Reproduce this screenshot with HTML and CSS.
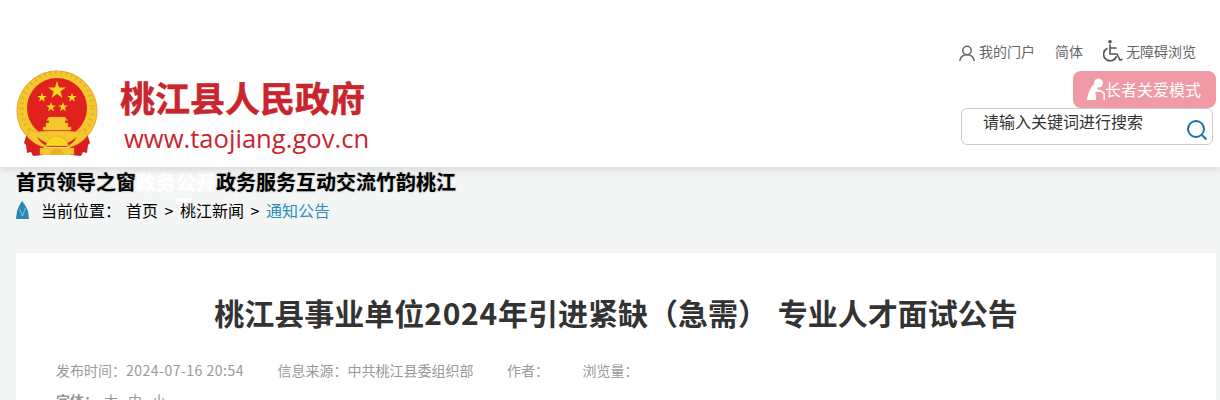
FILE: index.html
```html
<!DOCTYPE html>
<html lang="zh-CN">
<head>
    <meta charset="UTF-8">
    <meta name="viewport" content="width=device-width, initial-scale=1.0">
    <title>桃江县事业单位2024年引进紧缺（急需）专业人才面试公告</title>
    <link rel="stylesheet" href="styles.css">
</head>
<body>
    <header>
        <div class="logo">
            <svg class="emblem" viewBox="16 70 82 88" width="82" height="88">
                <!-- ribbons go under the ring -->
                <path d="M27 133c4 7 9 11 17 14l-1 8-10 1-2-4-4 1-1-8-2-2z" fill="#d8201f"/>
                <path d="M87 133c-4 7-9 11-17 14l1 8 10 1 2-4 4 1 1-8 2-2z" fill="#d8201f"/>
                <path d="M31 140C22 133 17 123 17 111 17 89 35 71 57 71s40 18 40 40c0 12-5 22-14 29z" fill="#f5c72f" stroke="#dc9d1e" stroke-width=".8"/>
                <circle cx="57" cy="108" r="35.500" fill="none" stroke="#e3a423" stroke-width="4" stroke-dasharray="1.500 4" opacity=".7"/>
                <circle cx="57" cy="108" r="30" fill="#e0211d"/>
                <polygon points="57,81 59.100,87.500 65.900,87.500 60.400,91.500 62.500,98 57,94 51.500,98 53.600,91.500 48.100,87.500 54.900,87.500" fill="#f8d61f"/>
                <polygon points="42,92.500 43.200,96 46.800,96 43.900,98.200 45,101.700 42,99.600 39,101.700 40.100,98.200 37.200,96 40.800,96" fill="#f8d61f"/>
                <polygon points="51,102 52.200,105.500 55.800,105.500 52.900,107.700 54,111.200 51,109.100 48,111.200 49.100,107.700 46.200,105.500 49.800,105.500" fill="#f8d61f"/>
                <polygon points="63,102 64.200,105.500 67.800,105.500 64.900,107.700 66,111.200 63,109.100 60,111.200 61.100,107.700 58.200,105.500 61.800,105.500" fill="#f8d61f"/>
                <polygon points="72,92.500 73.200,96 76.800,96 73.900,98.200 75,101.700 72,99.600 69,101.700 70.100,98.200 67.200,96 70.800,96" fill="#f8d61f"/>
                <path d="M49 117h16l2.500 3.500H65v2.500h3v4h3v3H43v-3h3v-4h3v-2.500h-2.500z" fill="#f5c72f" stroke="#dc9d1e" stroke-width=".4"/>
                <path d="M30 129c6 5 12 2 17 2h20c5 0 11 3 17-2l3 7c-5 6-11 10-18 11H45c-7-1-13-5-18-11z" fill="#f5c72f" stroke="#dc9d1e" stroke-width=".7"/>
                <path d="M37 137c4 3 7 5 10 6l3-5h14l3 5c3-1 6-3 10-6-3 5-7 8-11 10H48c-4-2-8-5-11-10z" fill="#d8201f"/>
                <path d="M46 146a11 10 0 0 1 22 0z" fill="#f8d61f" stroke="#dc9d1e" stroke-width=".8" stroke-dasharray="2 1"/>
                <rect x="40" y="148" width="34" height="6.500" fill="#f5c72f" stroke="#dc9d1e" stroke-width=".4"/>
                <path d="M50 154.500c2-5 4-6 7-6s5 1 7 6z" fill="#e9ae24"/>
            </svg>
            <div class="logo-text">
                <div class="site-name">桃江县人民政府</div>
                <div class="site-url">www.taojiang.gov.cn</div>
            </div>
        </div>
        <div class="tools">
            <div class="links">
                <a class="link-user">
                    <svg viewBox="0 0 18 18" width="18" height="18"><circle cx="9" cy="6.500" r="4.200" fill="none" stroke="#666" stroke-width="1.500"/><path d="M1.800 17c.5-4 3.400-6.300 7.200-6.300s6.700 2.300 7.200 6.300" fill="none" stroke="#666" stroke-width="1.500"/></svg>
                    我的门户
                </a>
                <a class="link-lang">简体</a>
                <a class="link-access">
                    <svg viewBox="0 0 20 22" width="20" height="22"><circle cx="7" cy="1.800" r="1.800" fill="#555"/><path d="M7 4.500V14h7l3 6 2.500-.8M7 8h6.500" fill="none" stroke="#555" stroke-width="1.600"/><path d="M4.500 8.200a6.600 6.600 0 1 0 9 8" fill="none" stroke="#555" stroke-width="1.600"/></svg>
                    无障碍浏览
                </a>
            </div>
            <a class="elder-btn">
                <svg viewBox="0 0 18 22" width="18" height="22"><circle cx="11.500" cy="5" r="4.500" fill="#fff"/><path d="M7 6C3 10 1 15 0 22h9v-5l-1-3h6l2.500 2v6H18v-7l-4-3-4-1 1-2C9 9 8 8 7 6z" fill="#fff"/></svg>长者关爱模式
            </a>
            <div class="search">
                <span class="search-text">请输入关键词进行搜索</span>
                <svg class="search-icon" viewBox="0 0 22 22" width="22" height="22"><circle cx="10" cy="10" r="8" fill="none" stroke="#1a74a8" stroke-width="2"/><path d="M16 16l4.500 4.500" stroke="#1a74a8" stroke-width="2"/></svg>
            </div>
        </div>
    </header>

    <nav>
        <a>首页</a><a>领导之窗</a><a class="nav-active">政务公开</a><a>政务服务</a><a>互动交流</a><a>竹韵桃江</a>
    </nav>

    <div class="crumb">
        <svg viewBox="0 0 13 18" width="13" height="18"><path d="M6 0l3 4 3 6 1 8H0l1-8 2-5z" fill="#2a86b2"/><path d="M6.500 15L3.500 8M6.500 15L9.500 7" stroke="#cfe6f0" stroke-width=".6" fill="none"/></svg>
        <span class="crumb-label">当前位置：</span>
        <a>首页</a><span class="sep">&gt;</span><a class="crumb-news">桃江新闻</a><span class="sep">&gt;</span><a class="crumb-now">通知公告</a>
    </div>

    <main>
        <h1>桃江县事业单位<span class="num">2024</span>年引进紧缺（急需） 专业人才面试公告</h1>
        <div class="meta">
            <span>发布时间：<span class="date">2024-07-16 20:54</span></span>
            <span>信息来源：中共桃江县委组织部</span>
            <span>作者：</span>
            <span>浏览量：</span>
        </div>
        <div class="fontsize">
            <b>字体：</b><a>大</a><a>中</a><a>小</a>
        </div>
    </main>
</body>
</html>
```

FILE: styles.css
```css
html, body {
    height: 400px;
    overflow: hidden;
}

body {
    margin: 0;
    background: #f4f6f6;
    font-family: "Noto Sans CJK SC", "Noto Sans", sans-serif;
    color: #000;
}

header {
    height: 167px;
    background: #fff;
    box-shadow: 0 2px 8px rgba(0, 0, 0, 0.15);
    display: flex;
    justify-content: space-between;
    position: relative;
}

.logo {
    display: flex;
    margin: 70px 0 0 16px;
}

.logo-text {
    margin-left: 22px;
}

.site-name {
    font-size: 35px;
    font-weight: 700;
    line-height: 44px;
    margin-top: 5px;
    color: #c9252d;
    -webkit-text-stroke: 0.5px #c9252d;
}

.site-url {
    font-family: "Open Sans", sans-serif;
    font-size: 25.6px;
    line-height: 32px;
    margin: 4px 0 0 4px;
    color: #c9252d;
}

.tools {
    width: 263px;
    display: flex;
    flex-direction: column;
    align-items: flex-end;
    padding-top: 40px;
}

.links {
    display: flex;
    align-items: center;
    height: 22px;
    gap: 20px;
    margin-right: 24px;
    font-size: 14px;
    color: #666;
}

.links a {
    display: flex;
    align-items: center;
    gap: 3px;
}

.link-user svg {
    margin-top: 3px;
}

.elder-btn {
    width: 143px;
    height: 37px;
    margin: 9px 4px 0 0;
    background: #ef9aa5;
    border-radius: 8px;
    color: #fff;
    font-size: 16px;
    display: flex;
    align-items: center;
    justify-content: center;
    box-sizing: border-box;
    padding: 0 1px 2px 0;
}

.search {
    width: 252px;
    height: 37px;
    margin-right: 7px;
    background: #fff;
    border: 1px solid #ccc;
    border-radius: 6px;
    box-sizing: border-box;
    display: flex;
    justify-content: space-between;
    padding: 0 4px 0 21px;
}

.search-text {
    font-size: 16px;
    line-height: 24px;
    color: #333;
}

.search-icon {
    margin-top: 10px;
}

nav {
    display: flex;
    padding-left: 16px;
    height: 30px;
    font-size: 20px;
    font-weight: 700;
    line-height: 30px;
    text-shadow: 0 0 2px rgba(0, 0, 0, 0.35);
}

.nav-active {
    color: #fff;
    text-shadow: 0 0 6px rgba(255, 255, 255, 0.8);
}

.crumb {
    display: flex;
    align-items: center;
    padding-left: 16px;
    height: 26px;
    font-size: 16px;
    position: relative;
}

.crumb > svg {
    margin-right: 12px;
}

.crumb-label {
    margin-right: 5px;
}

.sep {
    width: 9px;
    margin: 0 6.5px;
}

.crumb-news {
    position: relative;
}

.crumb-news::before {
    content: "";
    position: absolute;
    left: -4px;
    top: 0;
    width: 15px;
    height: 4px;
    background: #fff;
    z-index: -1;
}

.crumb-now {
    color: #2a8fb8;
}

main {
    margin: 30px 4px 0 16px;
    background: #fff;
    padding: 34px 40px 0;
}

h1 {
    margin: 0;
    font-size: 30px;
    line-height: 50px;
    font-weight: 700;
    text-align: center;
    color: #333;
    word-spacing: 3px;
}

.num {
    letter-spacing: 0.7px;
}

.meta {
    display: flex;
    gap: 33.5px;
    margin-top: 23px;
    font-size: 14px;
    line-height: 20px;
    color: #999;
}

.date {
    letter-spacing: 0.5px;
}

.fontsize {
    display: flex;
    gap: 10px;
    margin-top: 10px;
    font-size: 14px;
    line-height: 20px;
    color: #999;
}

.fontsize b {
    width: 38px;
    white-space: nowrap;
}
```
